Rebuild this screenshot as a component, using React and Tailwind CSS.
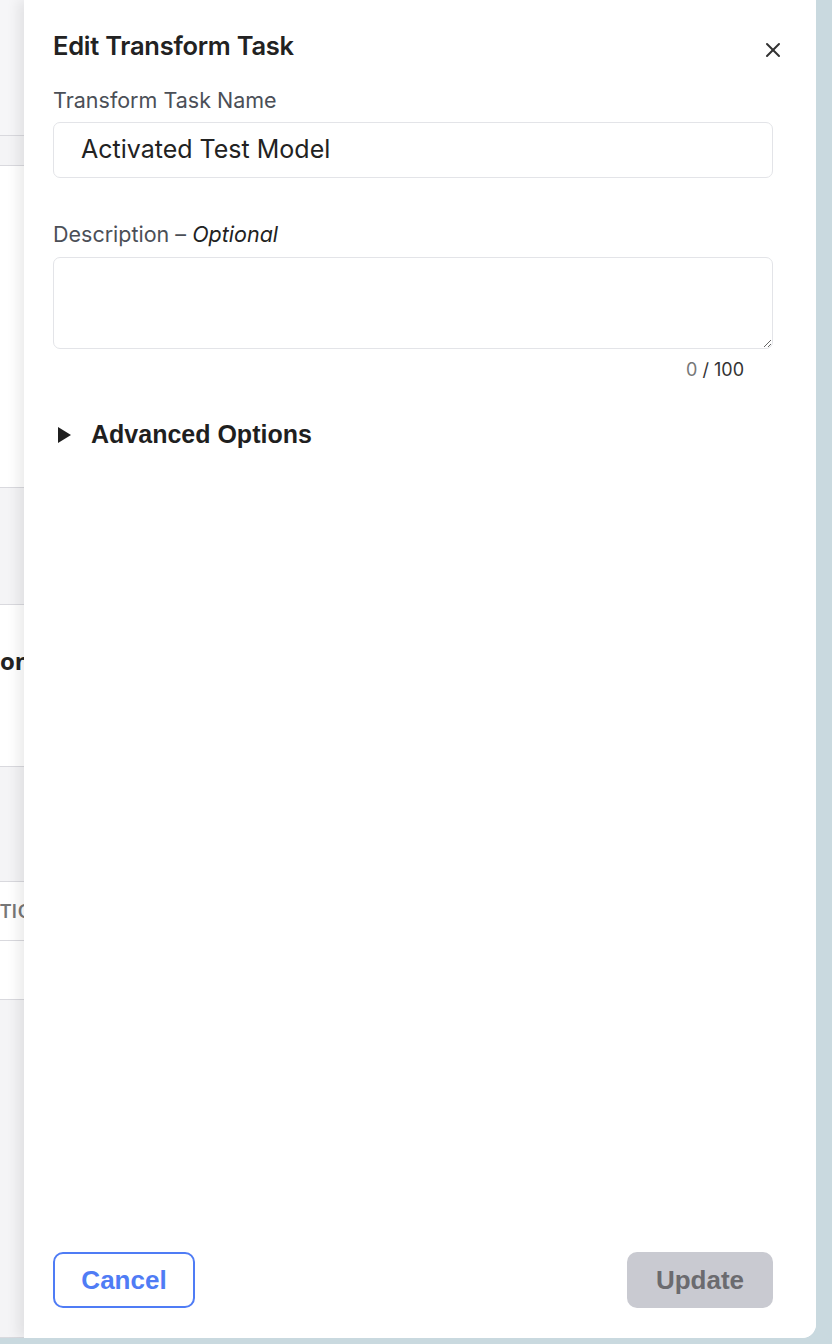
import { X } from 'lucide-react';

const INTER = { fontFamily: 'Inter, "Noto Sans", sans-serif' };

// rows of the page that sits behind the drawer
const BG_ROWS = [
    { h: 136, tone: 'bg-[#f6f6f8]' },
    { h: 30, tone: 'bg-[#f4f4f6]' },
    { h: 322, tone: 'bg-white' },
    { h: 117, tone: 'bg-[#f4f4f6]' },
    { h: 162, tone: 'bg-white', text: 'on', cls: 'pt-[38px] font-bold text-[24px] text-[#222]' },
    { h: 115, tone: 'bg-[#f4f4f6]' },
    { h: 59, tone: 'bg-white', text: 'TIO', cls: 'font-semibold text-[20px] text-[#777]' },
    { h: 59, tone: 'bg-white' },
    { h: 338, tone: 'bg-[#f4f4f6]' },
];

export default function App() {
    return (
        <div className="h-[1344px] w-[832px] bg-[#c9d9df] overflow-hidden" style={INTER}>
            <div className="h-[1338px] w-[816px] flex rounded-br-[14px] overflow-hidden bg-white">
                {/* page behind */}
                <div className="w-[24px] shrink-0 flex flex-col overflow-hidden">
                    {BG_ROWS.map((r, i) => (
                        <div key={i} className={`${r.tone} border-b border-[#d9d9de] flex ${r.cls && r.cls.startsWith('pt') ? 'items-start' : 'items-center'} overflow-hidden shrink-0`} style={{ height: r.h }}>
                            {r.text && <span className={`${r.cls} whitespace-nowrap`} style={{ fontFamily: '"Open Sans", sans-serif' }}>{r.text}</span>}
                        </div>
                    ))}
                </div>

                {/* drawer */}
                <div className="flex-1 flex flex-col bg-white shadow-[-6px_0_12px_rgba(0,0,0,0.08)] relative pl-[29px] pr-[43px]">
                    <div className="flex items-start justify-between mt-[30px]">
                        <h1 className="text-[25.5px] leading-[32px] font-semibold text-[#222] tracking-[-0.01em]">Edit Transform Task</h1>
                        <button className="mt-[8px] -mr-[12px] text-[#333]">
                            <X className="h-[24px] w-[24px]" strokeWidth={2} />
                        </button>
                    </div>

                    <label className="mt-[25px] text-[21.5px] leading-[26px] text-[#4b4f57]">Transform Task Name</label>
                    <div className="mt-[9px] h-[56px] rounded-[7px] border border-[#e3e4e8] flex items-center px-[27px] text-[25px] text-[#222]">
                        Activated Test Model
                    </div>

                    <label className="mt-[43px] text-[21.5px] leading-[26px] text-[#4b4f57]">
                        Description – <span className="italic text-[#222]">Optional</span>
                    </label>
                    <textarea className="mt-[10px] h-[92px] rounded-[7px] border border-[#e3e4e8] resize-y outline-none" />
                    <div className="mt-[9px] pr-[29px] text-right text-[18px] leading-[24px] text-[#333]">
                        <span className="text-[#777]">0</span> / 100
                    </div>

                    <div className="mt-[34px] flex items-center gap-[16px]" style={{ fontFamily: '"Liberation Sans", Arial, sans-serif' }}>
                        <svg width="18" height="18" viewBox="0 0 18 18" className="ml-[4px]">
                            <path d="M1 1 L14 9 L1 17 Z" fill="#1f1f1f" />
                        </svg>
                        <span className="text-[25px] font-bold text-[#1f1f1f]">Advanced Options</span>
                    </div>

                    <div className="mt-auto mb-[30px] flex items-center justify-between" style={{ fontFamily: '"Liberation Sans", Arial, sans-serif' }}>
                        <button className="h-[56px] w-[142px] rounded-[10px] border-2 border-[#4f7cf5] text-[#4f7cf5] text-[26px] font-bold bg-white">
                            Cancel
                        </button>
                        <button className="h-[56px] w-[146px] rounded-[10px] bg-[#c9cad1] text-[#6b6b6f] text-[26px] font-bold">
                            Update
                        </button>
                    </div>
                </div>
            </div>
        </div>
    );
}
